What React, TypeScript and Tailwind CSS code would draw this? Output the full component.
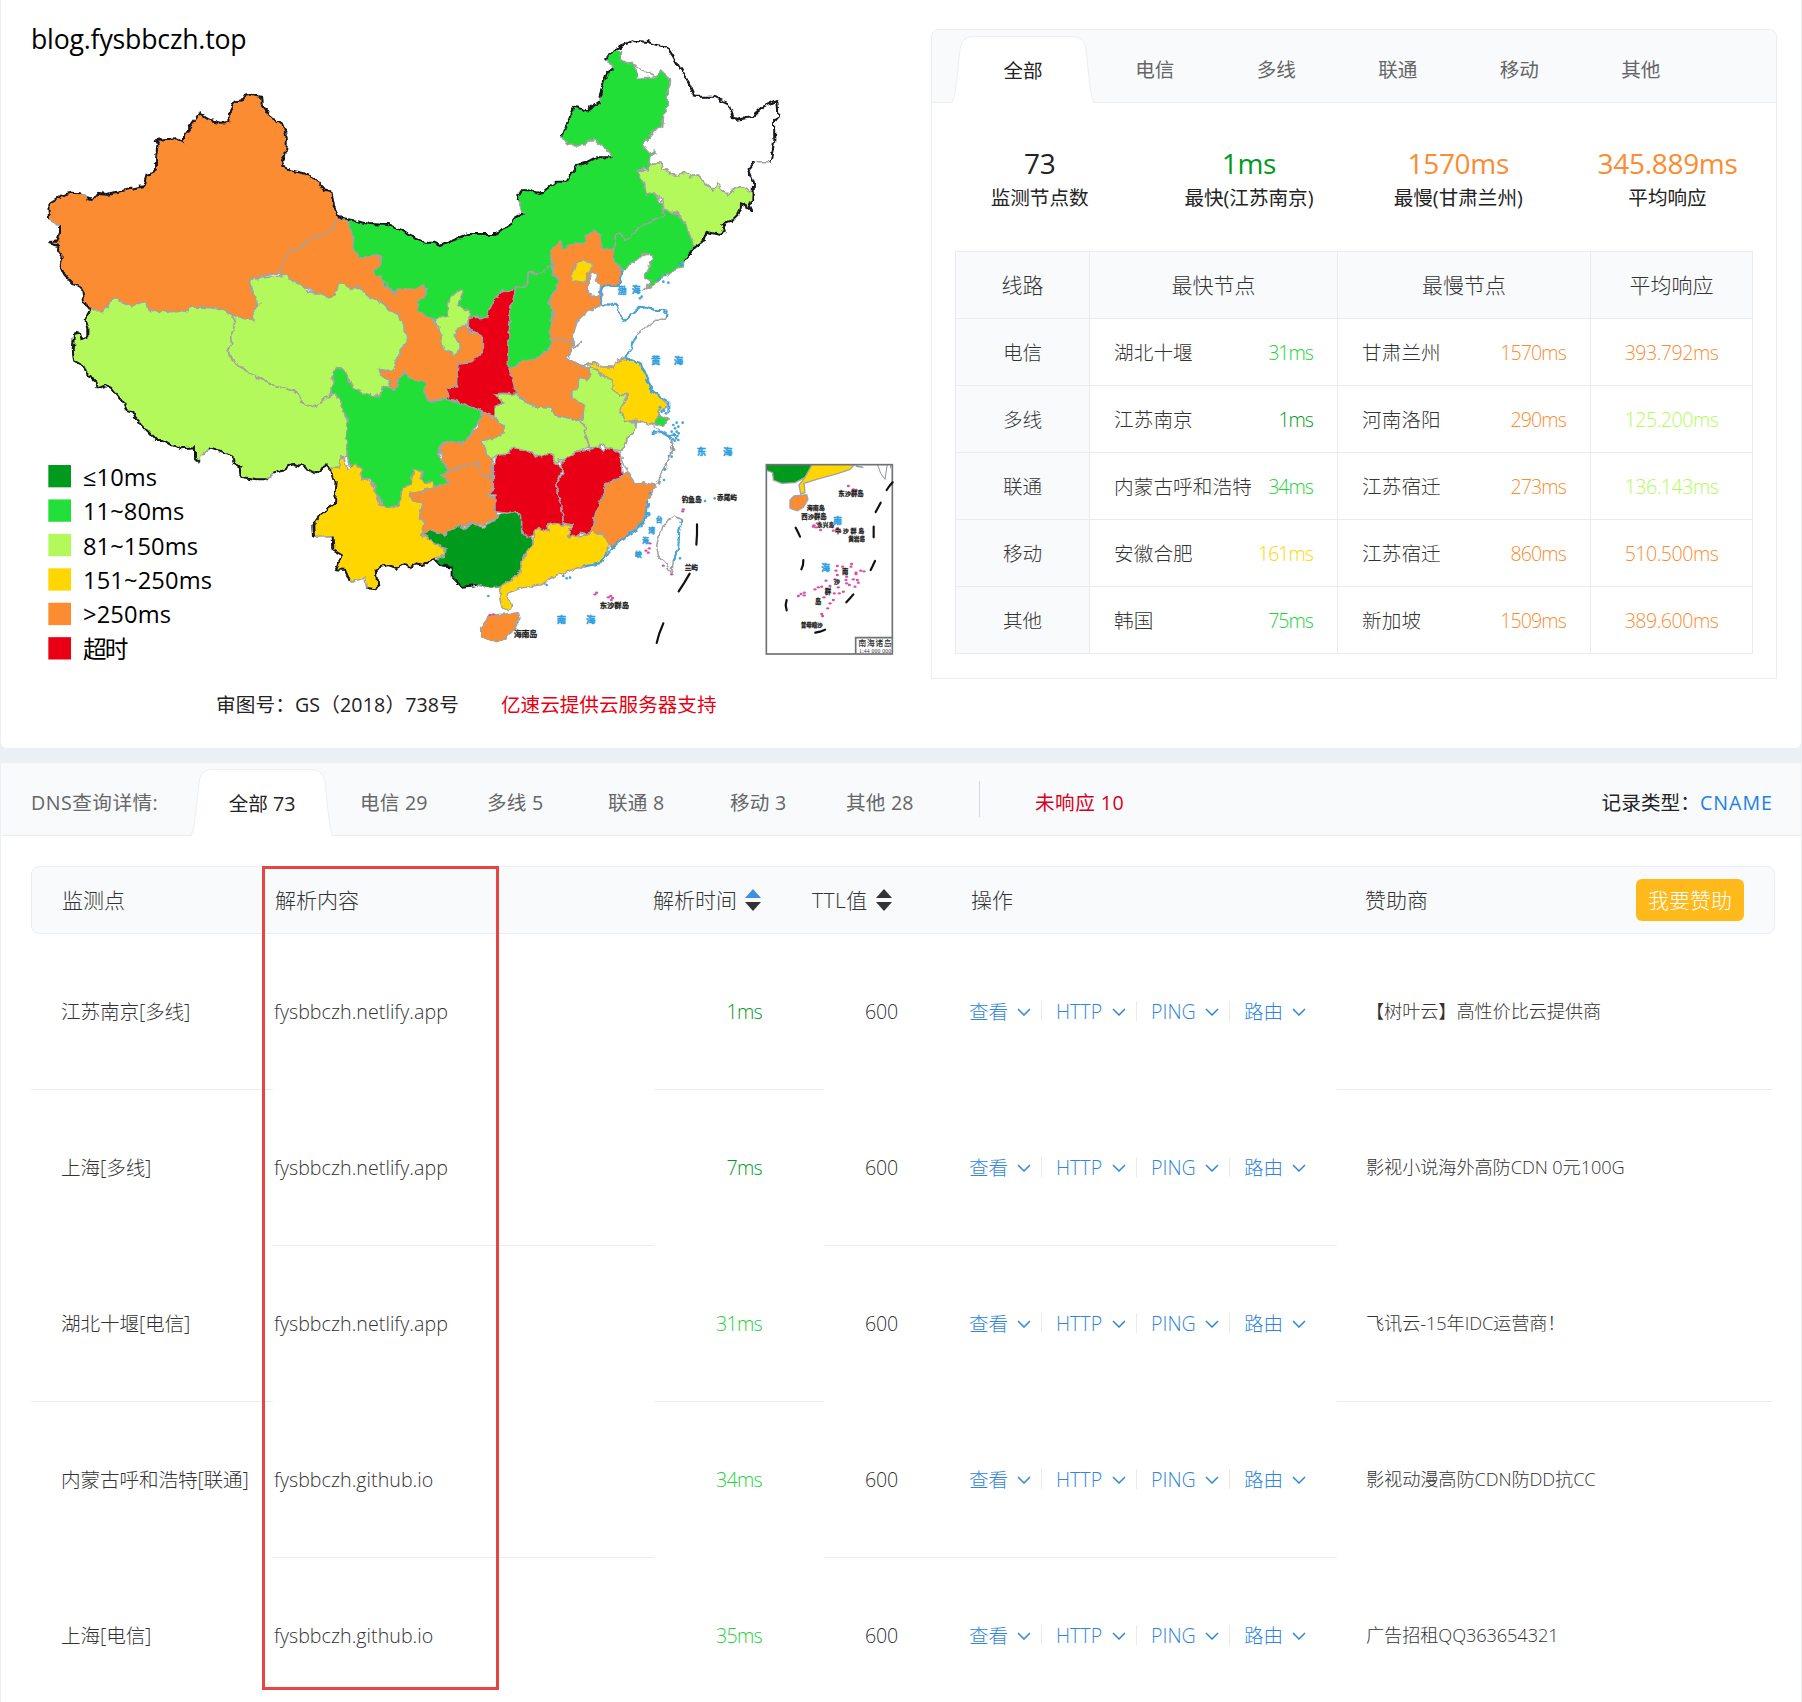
import React from "react";

type Province = { name: string; fill: string; d: string };

const C = {
  deep: "#009a1c",
  green: "#22df39",
  lime: "#b3f95b",
  yellow: "#ffd600",
  orange: "#fb8c31",
  red: "#ea0015",
  white: "#ffffff",
};

const PROVINCES: Province[] = [
  { name: "heilongjiang", fill: C.white, d: "1838,150 1865,138 1910,123 1940,125 1970,135 2000,140 2020,170 2040,205 2065,245 2085,290 2140,290 2185,310 2205,360 2255,352 2290,320 2332,300 2335,345 2322,360 2323,420 2312,485 2265,485 2245,508 2262,550 2262,580 2220,560 2200,570 2185,588 2165,565 2150,548 2140,572 2115,550 2095,525 2075,530 2055,515 2035,525 2010,520 1990,505 1985,488 1950,490 1928,432 1975,380 2000,240 1865,185" },
  { name: "neimenggu", fill: C.green, d: "1018,652 1110,672 1165,675 1205,690 1225,705 1275,728 1300,728 1320,738 1405,702 1485,702 1520,685 1540,655 1570,638 1552,600 1565,568 1585,568 1625,580 1665,545 1700,545 1730,495 1760,488 1790,472 1838,472 1820,450 1785,420 1765,420 1755,435 1705,435 1687,410 1705,360 1722,320 1760,332 1800,305 1800,285 1820,220 1840,205 1835,190 1815,180 1838,150 1865,152 1862,185 1880,192 1900,190 1915,235 1970,230 1980,212 2012,240 2002,270 2002,330 1988,345 1985,385 1975,380 1928,432 1950,460 1968,452 1968,462 1950,470 1945,505 1910,512 1925,535 1940,585 1965,578 1985,615 1992,645 1960,660 1920,685 1875,722 1860,700 1850,702 1845,745 1810,745 1785,720 1750,760 1700,770 1660,798 1620,818 1585,818 1582,855 1550,865 1510,890 1470,950 1405,970 1345,960 1290,958 1255,930 1200,890 1140,860 1060,780 1030,720" },
  { name: "gansu", fill: C.orange, d: "1018,652 1045,665 1060,720 1058,742 1075,775 1120,765 1142,770 1138,800 1118,812 1150,840 1165,870 1188,885 1200,865 1235,872 1270,855 1280,870 1275,890 1250,905 1255,930 1290,955 1300,965 1325,1000 1330,1045 1360,1065 1380,1040 1365,1010 1370,985 1395,980 1420,1000 1450,1015 1450,1055 1440,1075 1415,1085 1375,1090 1370,1130 1370,1160 1340,1165 1350,1185 1330,1195 1310,1205 1275,1195 1275,1155 1230,1135 1215,1120 1195,1135 1195,1160 1180,1168 1165,1140 1145,1128 1135,1105 1170,1112 1150,1040 1100,950 1000,900 835,830 855,780 865,750 900,745 935,712 960,708 1000,690 1005,665" },
  { name: "xinjiang", fill: C.orange, d: "741,282 783,290 786,318 812,352 828,360 848,375 860,410 860,440 855,468 843,488 848,500 875,512 910,520 940,532 972,568 994,574 1002,620 1018,652 1005,665 1000,690 960,708 935,712 900,745 865,750 855,780 835,820 750,838 760,880 780,912 758,930 762,962 722,948 695,945 670,930 640,925 610,922 575,922 565,935 545,932 510,932 480,938 445,925 432,905 395,918 375,908 340,895 310,932 285,932 270,930 252,905 246,865 215,848 192,822 182,800 188,770 174,750 175,738 145,730 150,725 172,725 180,700 180,675 150,660 148,612 170,598 185,585 215,578 245,580 258,595 275,600 292,578 320,582 380,570 430,558 440,525 468,512 468,470 473,432 465,420 530,415 552,430 552,405 598,340 625,358 660,368 688,366 690,330 702,305 730,300" },
  { name: "xizang", fill: C.lime, d: "270,930 285,932 310,932 340,895 375,908 395,918 432,905 445,925 480,938 510,932 545,932 565,935 575,922 610,922 640,925 670,930 695,945 705,962 700,990 692,1010 695,1030 685,1055 700,1080 720,1100 750,1120 790,1140 830,1160 860,1165 890,1178 905,1195 905,1210 935,1220 960,1210 985,1190 995,1180 1020,1192 1030,1230 1042,1260 1040,1320 1042,1370 1020,1370 1018,1405 990,1405 975,1390 965,1410 945,1420 905,1398 880,1392 850,1408 820,1418 800,1438 770,1438 722,1430 718,1398 705,1388 700,1372 660,1355 630,1345 605,1365 598,1385 585,1378 585,1342 545,1345 515,1335 490,1320 468,1320 435,1285 405,1250 400,1235 380,1230 370,1210 335,1165 320,1155 292,1165 290,1148 258,1118 250,1095 222,1080 218,1050 222,1005 240,1000 245,1020 262,1012 262,985 254,960" },
  { name: "qinghai", fill: C.lime, d: "750,838 862,825 870,838 905,852 915,872 950,880 980,892 1008,885 1015,848 1035,855 1055,865 1080,862 1100,885 1130,900 1155,915 1170,932 1195,942 1200,960 1215,970 1215,990 1222,1025 1200,1050 1200,1070 1185,1085 1188,1105 1170,1112 1135,1105 1145,1128 1165,1140 1172,1155 1145,1165 1140,1188 1115,1185 1090,1180 1060,1165 1045,1140 1035,1112 1015,1102 1000,1115 1000,1140 992,1175 985,1190 960,1210 935,1220 905,1210 905,1195 890,1178 860,1165 830,1160 790,1140 750,1120 720,1100 700,1080 685,1055 695,1030 692,1010 700,990 705,962 695,945 722,948 762,962 758,930 780,912 760,880" },
  { name: "sichuan", fill: C.green, d: "1015,1102 1035,1112 1045,1140 1060,1165 1090,1180 1115,1185 1140,1188 1145,1165 1172,1160 1180,1168 1195,1160 1195,1135 1215,1120 1230,1135 1265,1145 1275,1155 1275,1195 1310,1205 1330,1195 1390,1210 1445,1235 1435,1265 1420,1290 1405,1310 1390,1335 1365,1325 1340,1325 1320,1340 1318,1370 1335,1395 1350,1412 1325,1425 1350,1450 1302,1460 1275,1468 1265,1440 1265,1415 1245,1410 1240,1430 1230,1450 1205,1470 1200,1515 1160,1525 1145,1515 1130,1480 1115,1440 1085,1435 1080,1405 1065,1390 1050,1405 1042,1370 1040,1320 1042,1260 1030,1230 1020,1192 995,1180 992,1175 1000,1140 1000,1115" },
  { name: "yunnan", fill: C.yellow, d: "1020,1370 1032,1374 1042,1410 1065,1390 1080,1405 1085,1435 1105,1440 1115,1450 1130,1480 1140,1515 1160,1525 1200,1515 1205,1470 1230,1450 1245,1410 1265,1415 1262,1436 1275,1450 1300,1445 1302,1460 1270,1472 1235,1480 1232,1500 1268,1510 1258,1555 1275,1570 1265,1605 1300,1625 1335,1640 1335,1665 1300,1675 1270,1695 1250,1690 1230,1702 1215,1690 1190,1704 1165,1695 1130,1705 1135,1760 1130,1768 1100,1765 1095,1735 1050,1745 1035,1710 1008,1708 1025,1665 1000,1650 998,1610 942,1612 940,1575 970,1535 1005,1510 1010,1440 995,1435 990,1405 1018,1405" },
  { name: "guizhou", fill: C.orange, d: "1232,1480 1270,1475 1302,1462 1350,1450 1325,1425 1350,1412 1370,1408 1395,1390 1415,1395 1430,1385 1450,1425 1465,1435 1478,1410 1480,1460 1465,1490 1485,1490 1485,1535 1495,1550 1450,1575 1420,1572 1380,1585 1330,1605 1295,1592 1265,1605 1275,1570 1258,1555 1268,1510 1232,1500" },
  { name: "chongqing", fill: C.orange, d: "1445,1235 1485,1255 1510,1280 1510,1300 1480,1315 1445,1322 1455,1355 1475,1380 1478,1410 1465,1435 1450,1425 1430,1385 1415,1395 1395,1390 1370,1408 1350,1412 1335,1395 1325,1370 1320,1340 1340,1325 1365,1325 1390,1335 1405,1310 1435,1280" },
  { name: "guangxi", fill: C.deep, d: "1270,1600 1295,1590 1330,1605 1380,1575 1390,1588 1420,1572 1450,1582 1485,1560 1495,1545 1550,1532 1565,1550 1565,1595 1595,1605 1595,1640 1570,1670 1560,1715 1535,1740 1505,1760 1470,1765 1430,1755 1385,1760 1355,1730 1355,1700 1320,1695 1305,1680 1335,1668 1338,1645 1302,1632 1280,1615" },
  { name: "guangdong", fill: C.yellow, d: "1605,1600 1620,1585 1645,1595 1640,1575 1665,1570 1690,1575 1720,1575 1705,1610 1765,1605 1775,1592 1810,1605 1825,1630 1820,1665 1800,1690 1750,1700 1700,1715 1670,1725 1620,1755 1560,1765 1525,1780 1525,1800 1535,1815 1525,1828 1505,1820 1498,1790 1505,1760 1535,1740 1560,1715 1570,1670 1595,1640" },
  { name: "hainan", fill: C.orange, d: "1445,1875 1470,1845 1515,1842 1555,1838 1560,1855 1540,1890 1515,1920 1485,1928 1445,1910" },
  { name: "hunan", fill: C.red, d: "1480,1390 1495,1365 1525,1362 1540,1342 1580,1350 1620,1370 1650,1360 1665,1385 1690,1410 1670,1445 1672,1480 1685,1510 1690,1575 1665,1570 1640,1575 1645,1595 1620,1585 1605,1600 1580,1610 1565,1585 1565,1550 1550,1532 1525,1540 1485,1535 1485,1485 1465,1485 1480,1470" },
  { name: "jiangxi", fill: C.red, d: "1680,1385 1720,1360 1765,1350 1795,1338 1805,1355 1820,1340 1860,1360 1870,1420 1845,1440 1820,1450 1800,1505 1785,1545 1775,1590 1765,1605 1740,1600 1710,1612 1705,1590 1720,1575 1690,1570 1685,1510 1672,1480 1670,1445 1692,1420" },
  { name: "fujian", fill: C.orange, d: "1880,1415 1895,1430 1902,1450 1920,1455 1925,1445 1960,1450 1965,1465 1940,1500 1940,1540 1910,1585 1870,1615 1835,1645 1825,1630 1810,1605 1775,1592 1785,1545 1800,1505 1820,1450 1870,1425" },
  { name: "zhejiang", fill: C.white, d: "1910,1265 1960,1275 1970,1290 2010,1310 2020,1340 2010,1380 1990,1400 1975,1450 1960,1455 1930,1445 1920,1455 1902,1450 1895,1430 1875,1400 1860,1355 1880,1330 1880,1315 1905,1295" },
  { name: "anhui", fill: C.lime, d: "1760,1105 1780,1108 1800,1120 1835,1140 1840,1170 1862,1192 1880,1180 1885,1192 1870,1200 1860,1235 1880,1265 1910,1265 1905,1295 1880,1315 1880,1330 1860,1352 1820,1345 1800,1330 1795,1345 1767,1342 1760,1310 1752,1290 1758,1282 1732,1262 1752,1255 1755,1215 1730,1205 1710,1180 1730,1165 1735,1135 1765,1140 1775,1120" },
  { name: "hubei", fill: C.lime, d: "1485,1182 1510,1180 1548,1185 1575,1205 1605,1220 1655,1225 1665,1245 1695,1250 1732,1262 1758,1282 1752,1290 1767,1342 1740,1350 1705,1370 1665,1385 1655,1360 1620,1370 1580,1350 1540,1342 1525,1362 1495,1365 1475,1380 1455,1355 1445,1322 1480,1315 1510,1300 1510,1280 1485,1255 1485,1220 1505,1205" },
  { name: "henan", fill: C.orange, d: "1650,1015 1715,1025 1720,1040 1700,1075 1725,1090 1755,1100 1775,1120 1765,1140 1735,1135 1730,1165 1710,1180 1730,1205 1755,1215 1750,1258 1720,1260 1695,1250 1665,1245 1655,1225 1605,1220 1575,1205 1548,1180 1535,1130 1525,1110 1570,1085 1620,1070 1650,1050" },
  { name: "shaanxi", fill: C.red, d: "1550,862 1545,890 1525,928 1532,950 1528,990 1525,1110 1535,1130 1548,1183 1510,1180 1485,1182 1505,1205 1485,1220 1485,1250 1445,1235 1390,1210 1360,1200 1330,1195 1350,1185 1340,1165 1370,1160 1370,1130 1375,1090 1415,1085 1450,1055 1450,1015 1405,985 1405,955 1425,948 1435,957 1460,952 1470,925 1485,895 1510,870 1530,875" },
  { name: "shanxi", fill: C.green, d: "1582,855 1585,820 1620,818 1655,798 1660,825 1675,840 1670,870 1650,885 1650,910 1660,940 1650,1005 1650,1050 1620,1070 1570,1085 1535,1105 1525,1110 1528,990 1532,950 1525,928 1545,890 1550,865" },
  { name: "ningxia", fill: C.lime, d: "1300,960 1320,952 1345,945 1345,920 1350,890 1385,868 1390,875 1375,915 1410,935 1405,960 1400,980 1370,985 1365,1010 1380,1030 1380,1050 1365,1065 1330,1050 1325,1020 1320,985" },
  { name: "hebei", fill: C.orange, d: "1650,755 1680,722 1690,748 1720,730 1755,730 1760,705 1785,690 1800,705 1810,745 1845,750 1840,775 1868,812 1860,850 1845,860 1820,855 1805,865 1805,900 1805,915 1760,935 1730,965 1720,1000 1720,1020 1715,1025 1650,1015 1650,1005 1660,940 1650,910 1650,885 1670,870 1675,840 1660,825 1660,795" },
  { name: "beijing", fill: C.yellow, d: "1750,778 1760,788 1778,795 1775,810 1760,820 1760,840 1745,848 1715,845 1715,820 1725,795" },
  { name: "tianjin", fill: C.white, d: "1775,818 1788,818 1790,840 1802,850 1800,880 1790,890 1765,882 1765,840" },
  { name: "liaoning", fill: C.green, d: "1992,625 2015,640 2035,640 2065,685 2085,742 2050,785 2045,800 2010,815 1960,855 1930,870 1955,845 1932,830 1958,775 1945,760 1925,765 1900,790 1868,812 1840,775 1845,745 1850,702 1860,700 1875,722 1920,685 1960,660 1992,645" },
  { name: "jilin", fill: C.lime, d: "1950,490 1985,488 1990,505 2010,520 2035,525 2055,515 2075,530 2095,525 2115,550 2140,572 2150,548 2165,565 2185,588 2200,570 2220,560 2262,580 2260,600 2245,610 2255,632 2225,612 2215,645 2195,665 2170,672 2178,695 2160,705 2120,695 2110,725 2085,742 2065,685 2035,640 2015,640 1992,625 1985,600 1965,578 1940,585 1925,535 1910,512 1945,510" },
  { name: "shandong", fill: C.white, d: "1805,915 1850,915 1860,950 1875,962 1920,920 1970,930 2000,930 1995,958 1970,958 1910,1005 1880,1070 1850,1085 1840,1102 1810,1100 1785,1085 1760,1095 1725,1090 1700,1075 1720,1040 1720,1000 1730,965 1760,935" },
  { name: "jiangsu", fill: C.yellow, d: "1765,1098 1780,1085 1795,1100 1840,1102 1850,1085 1875,1075 1925,1095 1955,1170 1980,1190 2005,1215 1975,1235 1970,1270 1950,1275 1910,1260 1875,1265 1860,1235 1870,1210 1885,1192 1880,1180 1860,1190 1840,1170 1835,1140 1800,1120 1780,1108" },
  { name: "shanghai", fill: C.green, d: "1975,1240 2008,1260 1990,1278 1968,1272" },
  { name: "taiwan", fill: C.white, d: "2025,1548 2048,1560 2038,1590 2035,1640 2020,1685 2015,1720 2000,1695 1975,1670 1970,1635 1985,1580 2010,1558" },
];

const FRONTIERS = [
  "1018,652 1002,620 994,574 972,568 940,532 910,520 875,512 848,500 843,488 855,468 860,440 860,410 848,375 828,360 812,352 786,318 783,290 741,282 730,300 702,305 690,330 688,366 660,368 625,358 598,340 552,405 552,430 530,415 465,420 473,432 468,470 468,512 440,525 430,558 380,570 320,582 292,578 275,600 258,595",
  "245,580 215,578 185,585 170,598 148,612 150,660",
  "180,675 180,700 172,725 150,725 145,730 175,738 174,750 188,770 182,800 192,822 215,848 246,865 252,905 270,930 254,960 262,985 262,1012 245,1020 240,1000 222,1005 218,1050 222,1080 250,1095 258,1118 290,1148 292,1165 320,1155 335,1165 370,1210 380,1230 400,1235 405,1250 435,1285 468,1320 490,1320 515,1335 545,1345 585,1342 585,1378 598,1385",
  "630,1345 660,1355 700,1372 705,1388 718,1398 722,1430 770,1438 800,1438",
  "820,1418 850,1408 880,1392 905,1398 945,1420 965,1410 975,1390 990,1405 995,1435 1010,1440 1005,1510 970,1535 940,1575 942,1612",
  "998,1610 1000,1650 1025,1665 1008,1708 1035,1710 1050,1745",
  "1100,1765 1130,1768 1135,1760 1130,1705 1165,1695 1190,1704 1215,1690 1230,1702 1250,1690 1270,1695 1300,1675 1320,1695 1355,1700 1355,1730 1385,1760 1430,1755",
  "1018,652 1110,672 1165,675 1205,690 1225,705 1275,728 1300,728 1320,738 1405,702 1485,702 1520,685 1540,655 1570,638",
  "1552,600 1565,568 1585,568 1625,580 1665,545 1700,545 1730,495 1760,488 1790,472 1838,472",
  "1687,410 1705,360 1722,320 1760,332 1800,305",
  "1798,290 1820,220 1840,205",
  "1815,180 1838,150 1865,138 1910,123 1940,125 1970,135 2000,140 2020,170 2040,205 2065,245 2085,290 2140,290 2185,310 2205,360 2255,352 2290,320 2332,300 2335,345 2322,360 2323,420 2312,485",
  "2265,485 2245,508 2262,550 2260,600 2245,610 2255,632 2225,612 2215,645 2195,665 2170,672 2178,695 2160,705 2120,695 2110,725 2085,742 2050,785",
];

const COASTS = [
  "2045,800 2042,788",
  "1868,812 1860,850 1845,860 1820,855 1805,865 1800,890 1812,912 1850,915 1860,950 1875,962 1920,920 1970,930 2000,930 1998,955",
  "1910,1005 1880,1070",
  "1880,1075 1925,1095 1955,1170 1980,1190 2005,1205 2005,1240",
  "1955,1300 1985,1295 2010,1310 2025,1300",
  "1945,1500 1940,1545 1910,1590 1870,1615 1835,1645 1800,1690 1750,1700",
  "2048,1560 2038,1590 2035,1640 2020,1685",
];

const SEA_DOTS = [
  [1980, 835], [1990, 845], [1995, 825], [1975, 840], [2005, 848], [1925, 890], [1920, 895],
  [2020, 1275], [2030, 1268], [2035, 1280], [2015, 1295], [2030, 1295], [2028, 1315], [2035, 1320], [2048, 1268],
  [2025, 1285], [2022, 1305], [2032, 1308], [2018, 1318], [2024, 1322], [2036, 1300], [1980, 1222], [1992, 1232], [1998, 1240], [1985, 1235],
  [2015, 1370], [1995, 1408], [1992, 1440], [1950, 1480], [1945, 1515], [1947, 1540], [1930, 1570],
  [1948, 1545], [1942, 1542], [1925, 1578], [2115, 1503], [2144, 1495],
  [2040, 1675], [1700, 1735], [1690, 1728], [1710, 1733], [1640, 1755], [1465, 1788],
];

type Label = { t: string; x: number; y: number; s: number; w: number };

const BLACK_LABELS: Label[] = [
  { t: "钓鱼岛", x: 2045, y: 1507, s: 20, w: 60 },
  { t: "赤尾屿", x: 2151, y: 1499, s: 20, w: 60 },
  { t: "兰屿", x: 2054, y: 1711, s: 20, w: 40 },
  { t: "东沙群岛", x: 1799, y: 1824, s: 22, w: 88 },
  { t: "海南岛", x: 1541, y: 1911, s: 24, w: 71 },
  { t: "东沙群岛", x: 2515, y: 1489, s: 19, w: 76 },
  { t: "海南岛", x: 2420, y: 1531, s: 18, w: 54 },
  { t: "西沙群岛", x: 2404, y: 1557, s: 19, w: 76 },
  { t: "永兴岛", x: 2452, y: 1580, s: 16, w: 50 },
  { t: "中沙群岛", x: 2505, y: 1600, s: 18, w: 88 },
  { t: "黄岩岛", x: 2545, y: 1624, s: 17, w: 50 },
  { t: "南", x: 2526, y: 1721, s: 19, w: 19 },
  { t: "沙", x: 2501, y: 1753, s: 19, w: 19 },
  { t: "群", x: 2474, y: 1783, s: 19, w: 19 },
  { t: "岛", x: 2445, y: 1813, s: 19, w: 19 },
  { t: "曾母暗沙", x: 2402, y: 1880, s: 17, w: 66 },
];

const BLUE_LABELS: Label[] = [
  { t: "渤", x: 1853, y: 881, s: 26, w: 25 },
  { t: "海", x: 1895, y: 880, s: 26, w: 25 },
  { t: "黄", x: 1953, y: 1091, s: 28, w: 27 },
  { t: "海", x: 2021, y: 1091, s: 28, w: 27 },
  { t: "东", x: 2090, y: 1365, s: 28, w: 27 },
  { t: "海", x: 2169, y: 1365, s: 28, w: 27 },
  { t: "南", x: 1670, y: 1868, s: 28, w: 27 },
  { t: "海", x: 1758, y: 1868, s: 28, w: 27 },
  { t: "台", x: 1967, y: 1567, s: 20, w: 20 },
  { t: "湾", x: 1945, y: 1598, s: 20, w: 20 },
  { t: "海", x: 1926, y: 1629, s: 20, w: 20 },
  { t: "峡", x: 1905, y: 1670, s: 20, w: 20 },
  { t: "南", x: 2500, y: 1571, s: 26, w: 25 },
  { t: "海", x: 2464, y: 1714, s: 26, w: 25 },
];

const PINK_DOTS = [
  [2512, 1698], [2508, 1712], [2512, 1725], [2505, 1738], [2553, 1700], [2555, 1692], [2568, 1718], [2582, 1712], [2592, 1714], [2568, 1722],
  [2540, 1750], [2548, 1755], [2560, 1738], [2565, 1760], [2575, 1748], [2572, 1740], [2538, 1740], [2478, 1742], [2445, 1768], [2455, 1762], [2465, 1760],
  [2490, 1758], [2515, 1762], [2518, 1780], [2503, 1780], [2500, 1800], [2490, 1810], [2483, 1825], [2465, 1842], [2468, 1848], [2472, 1792],
  [2395, 1788], [2403, 1782], [2413, 1786], [2413, 1778], [2530, 1775], [2442, 1576], [2448, 1582], [2462, 1590], [2500, 1592], [2512, 1585], [2520, 1595],
  [2545, 1458], [2568, 1470], [2560, 1468], [2590, 1610], [2540, 1730], [2528, 1700], [2440, 1580], [2452, 1570],
  [1790, 1778], [1785, 1783], [2050, 1528], [2048, 1534], [1950, 1630], [1948, 1645], [1938, 1652], [1945, 1658], [1990, 1697], [2015, 1723], [1470, 1845], [1480, 1843],
  [1825, 1792], [1832, 1788], [1838, 1794], [1834, 1800],
];

const DASHES = [
  "2091,1573 2091,1603 2089,1634", "2069,1721 2053,1748 2036,1774", "1990,1870 1978,1900 1970,1929",
  "2678,1447 2669,1457 2660,1470", "2642,1508 2634,1523 2627,1536", "2387,1583 2394,1597 2400,1610",
  "2621,1580 2621,1612", "2410,1680 2409,1695 2404,1708", "2625,1683 2618,1698 2612,1710",
  "2360,1800 2357,1815 2360,1831", "2560,1783 2550,1795 2539,1807", "2475,1889 2460,1895 2446,1898",
];

const LEGEND = [
  { c: C.deep, t: "≤10ms", w: 222 },
  { c: C.green, t: "11~80ms", w: 304 },
  { c: C.lime, t: "81~150ms", w: 345 },
  { c: C.yellow, t: "151~250ms", w: 387 },
  { c: C.orange, t: ">250ms", w: 264 },
  { c: C.red, t: "超时", w: 136 },
];

function ChinaMap() {
  return (
    <svg className="block h-[690px] w-[920px]" viewBox="0 0 2760 2070">
      <defs>
        <filter id="rough" x="0" y="0" width="2760" height="2070" filterUnits="userSpaceOnUse">
          <feTurbulence type="fractalNoise" baseFrequency="0.05" numOctaves="2" seed="4" result="n" />
          <feDisplacementMap in="SourceGraphic" in2="n" scale="18" xChannelSelector="R" yChannelSelector="G" />
        </filter>
        <clipPath id="inset">
          <rect x="2299" y="1395" width="378" height="568" />
        </clipPath>
      </defs>
      <g filter="url(#rough)" strokeLinejoin="round">
        {PROVINCES.map((p) => (
          <polygon key={p.name} points={p.d} fill={p.fill} stroke="#a3a3a3" strokeWidth="4.5" />
        ))}
        <path d="M1721 1042 L1746 1024" stroke="#a3a3a3" strokeWidth="7" />
        {FRONTIERS.map((d, i) => (
          <polyline key={i} points={d} fill="none" stroke="#16181c" strokeWidth="6" />
        ))}
        {COASTS.map((d, i) => (
          <polyline key={i} points={d} fill="none" stroke="#42a3dd" strokeWidth="6" />
        ))}
        <polyline points="1880,1075 1925,1095 1955,1170 1980,1190" fill="none" stroke="#42a3dd" strokeWidth="9" />
        <polyline points="2010,1310 2018,1345 2008,1380 1990,1410 1970,1450" fill="none" stroke="#8f99a3" strokeWidth="6" strokeDasharray="10 4" />
      </g>
      {SEA_DOTS.map(([x, y], i) => (
        <circle key={i} cx={x} cy={y} r="4" fill="#42a3dd" />
      ))}

      <g clipPath="url(#inset)">
        <rect x="2297" y="1392" width="382" height="572" fill="#fff" />
        <path d="M2297 1392 H2437 L2433 1415 L2415 1432 L2385 1448 L2345 1450 L2320 1440 L2318 1418 L2297 1410Z" fill={C.deep} stroke="#a3a3a3" strokeWidth="4" />
        <path d="M2437 1392 H2565 L2550 1408 L2515 1420 L2450 1438 L2412 1450 L2415 1478 L2402 1482 L2397 1455 L2415 1432Z" fill={C.yellow} stroke="#a3a3a3" strokeWidth="4" />
        <path d="M2370 1500 L2382 1488 L2420 1484 L2424 1498 L2410 1522 L2392 1532 L2370 1525Z" fill={C.orange} stroke="#a3a3a3" strokeWidth="4" />
        <path d="M2632 1392 L2642 1420 L2655 1438 L2662 1392 M2672 1392 V1405" fill="none" stroke="#8794a0" strokeWidth="3" />
        <path d="M2567 1398 L2590 1402" stroke="#8794a0" strokeWidth="4" />
      </g>
      <rect x="2299" y="1394" width="378" height="568" fill="none" stroke="#6f7276" strokeWidth="5" />
      <path d="M2567 1962 V1913 H2677" fill="none" stroke="#6f7276" strokeWidth="5" />
      <g fill="#333" fontFamily="'Noto Sans CJK SC', sans-serif" fontWeight="500">
        <text x="2575" y="1939" fontSize="24" textLength="100">南海诸岛</text>
        <text x="2577" y="1958" fontSize="17" textLength="96" fontFamily="'Liberation Serif', serif">1:44 000 000</text>
      </g>

      {PINK_DOTS.map(([x, y], i) => (
        <ellipse key={i} cx={x} cy={y} rx="4.8" ry="3.6" fill="#d950a6" />
      ))}
      {DASHES.map((d, i) => (
        <polyline key={i} points={d} fill="none" stroke="#111" strokeWidth="6.5" strokeLinecap="round" />
      ))}
      <g fontFamily="'Noto Sans CJK SC', sans-serif" fontWeight="700">
        {BLACK_LABELS.map((l, i) => (
          <text key={i} x={l.x} y={l.y} fontSize={l.s} textLength={l.w} fill="#1c1c1c" stroke="#1c1c1c" strokeWidth="0.8">{l.t}</text>
        ))}
        {BLUE_LABELS.map((l, i) => (
          <text key={i} x={l.x} y={l.y} fontSize={l.s} fill="#2f9fe0" stroke="#2f9fe0" strokeWidth="1.4">{l.t}</text>
        ))}
      </g>

      <g fontFamily="'Open Sans', 'Noto Sans CJK SC', sans-serif" fill="#000">
        <text x="93" y="147" fontSize="80" textLength="647">blog.fysbbczh.top</text>
        {LEGEND.map((l, i) => (
          <g key={l.t}>
            <rect x="145" y={1395 + i * 103.3} width="68" height="67" fill={l.c} />
            <text x="249" y={1457 + i * 103.3} fontSize="71" textLength={l.w}>{l.t}</text>
          </g>
        ))}
      </g>
    </svg>
  );
}

function ActiveTab({ children }: { children: React.ReactNode }) {
  return (
    <div className="relative -mb-px flex h-[67px] w-[142px] shrink-0 items-center justify-center text-[#222]">
      <svg className="absolute inset-0 h-full w-full" viewBox="0 0 142 67">
        <path d="M0 67 C4 60 6 30 8 14 Q9 0.5 21 0.5 H121 Q133 0.5 134 14 C136 30 138 60 142 67Z" fill="#fff" />
        <path d="M0 66.500 C4 60 6 30 8 14 Q9 0.5 21 0.5 H121 Q133 0.5 134 14 C136 30 138 60 142 66.500" fill="none" stroke="#eceef0" />
      </svg>
      <span className="relative pt-[3px]">{children}</span>
    </div>
  );
}

const STATS = [
  { v: "73", l: "监测节点数", c: "text-[#222]" },
  { v: "1ms", l: "最快(江苏南京)", c: "text-[#009a1c]" },
  { v: "1570ms", l: "最慢(甘肃兰州)", c: "text-[#fb8c31]" },
  { v: "345.889ms", l: "平均响应", c: "text-[#fb8c31]" },
];

const ORANGE = "text-[#fb8c31]";
const GREEN = "text-[#22d339]";
const DEEP = "text-[#009a1c]";
const LIME = "text-[#b3f95b]";

const LINES = [
  ["电信", "湖北十堰", "31ms", GREEN, "甘肃兰州", "1570ms", "393.792ms", ORANGE],
  ["多线", "江苏南京", "1ms", DEEP, "河南洛阳", "290ms", "125.200ms", LIME],
  ["联通", "内蒙古呼和浩特", "34ms", GREEN, "江苏宿迁", "273ms", "136.143ms", LIME],
  ["移动", "安徽合肥", "161ms", "text-[#ffd600]", "江苏宿迁", "860ms", "510.500ms", ORANGE],
  ["其他", "韩国", "75ms", GREEN, "新加坡", "1509ms", "389.600ms", ORANGE],
];

function SummaryPanel() {
  return (
    <div className="mt-[29px] ml-[11px] h-[650px] w-[846px] shrink-0 rounded-t-lg border border-[#ebeef0]">
      <div className="flex h-[73px] items-end rounded-t-lg border-b border-[#eceef0] bg-[#f8fafc] pl-[20px] text-[19.6px] text-[#666]">
        <ActiveTab>全部</ActiveTab>
        <div className="flex h-[66px] items-center pt-[2px]">
          {["电信", "多线", "联通", "移动", "其他"].map((t) => (
            <span key={t} className="w-[121.500px] text-center">{t}</span>
          ))}
        </div>
      </div>
      <div className="flex h-[148px] pt-[40px] pl-[3px]">
        {STATS.map((s) => (
          <div key={s.l} className="w-[209.300px] shrink-0 text-center whitespace-nowrap">
            <div className={`text-[28px] leading-[40px] tracking-[-0.3px] ${s.c}`}>{s.v}</div>
            <div className="text-[19.6px] leading-[30px] text-[#222]">{s.l}</div>
          </div>
        ))}
      </div>
      <div className="ml-[23px] w-[798px] border-t border-l border-[#ebebee] font-light whitespace-nowrap">
        <div className="grid h-[67px] grid-cols-[134px_248px_253px_162px] bg-[#f8fafc] text-[21px] text-[#333]">
          {["线路", "最快节点", "最慢节点", "平均响应"].map((h) => (
            <div key={h} className="flex items-center justify-center border-r border-b border-[#ebebee] pt-[2px]">{h}</div>
          ))}
        </div>
        {LINES.map((r) => (
          <div key={r[0]} className="grid h-[67px] grid-cols-[134px_248px_253px_162px] text-[19.6px] text-[#333]">
            <div className="flex items-center justify-center border-r border-b border-[#ebebee] bg-[#f8fafc] pt-px">{r[0]}</div>
            <div className="flex items-center justify-between border-r border-b border-[#ebebee] px-[24px] pt-px">
              <span className="tracking-[0.100px]">{r[1]}</span>
              <span className={`tracking-[-1px] ${r[3]}`}>{r[2]}</span>
            </div>
            <div className="flex items-center justify-between border-r border-b border-[#ebebee] px-[24px] pt-px">
              <span className="tracking-[0.100px]">{r[4]}</span>
              <span className={`tracking-[-0.9px] ${ORANGE}`}>{r[5]}</span>
            </div>
            <div className={`flex items-center justify-center border-r border-b border-[#ebebee] pt-px tracking-[-0.5px] ${r[7]}`}>{r[6]}</div>
          </div>
        ))}
      </div>
    </div>
  );
}

function Sort({ up }: { up: string }) {
  return (
    <svg className="h-[22px] w-[16px]" viewBox="0 0 16 22">
      <path d="M8 0 L16 9 H0Z" fill={up} />
      <path d="M8 22 L16 13 H0Z" fill="#333" />
    </svg>
  );
}

function Action({ label, width, last }: { label: string; width: string; last?: boolean }) {
  return (
    <span className={`flex shrink-0 items-center ${width}`}>
      <span className="flex-1">{label}</span>
      <svg className="mt-[2px] h-[8px] w-[14px]" viewBox="0 0 14 8" fill="none" stroke="#2f86dc" strokeWidth="1.5">
        <path d="M1 1 L7 7 L13 1" />
      </svg>
      {!last && <i className="mr-[14px] ml-[10px] h-[20px] w-px bg-[#e8eaec]" />}
    </span>
  );
}

const ROWS = [
  ["江苏南京[多线]", "fysbbczh.netlify.app", "1ms", DEEP, "【树叶云】高性价比云提供商"],
  ["上海[多线]", "fysbbczh.netlify.app", "7ms", DEEP, "影视小说海外高防CDN 0元100G"],
  ["湖北十堰[电信]", "fysbbczh.netlify.app", "31ms", GREEN, "飞讯云-15年IDC运营商！"],
  ["内蒙古呼和浩特[联通]", "fysbbczh.github.io", "34ms", GREEN, "影视动漫高防CDN防DD抗CC"],
  ["上海[电信]", "fysbbczh.github.io", "35ms", GREEN, "广告招租QQ363654321"],
];

const TABS = [
  ["电信 29", "w-[127px]"],
  ["多线 5", "w-[121px]"],
  ["联通 8", "w-[122px]"],
  ["移动 3", "w-[116px]"],
  ["其他 28", "w-[133px]"],
];

export default function App() {
  return (
    <div className="h-[1702px] w-[1802px] overflow-hidden bg-[#ebf0f4] font-['Open_Sans','Noto_Sans_CJK_SC',sans-serif]">
      <section className="mx-px flex h-[748px] rounded-b-md bg-white">
        <div className="-ml-px w-[920px] shrink-0">
          <ChinaMap />
          <div className="-mt-px flex h-[32px] items-center pl-[216px] text-[19.6px] whitespace-nowrap text-[#222]">
            <span className="w-[285px] tracking-[0.150px]">审图号：GS（2018）738号</span>
            <span className="text-[#e60012]">亿速云提供云服务器支持</span>
          </div>
        </div>
        <SummaryPanel />
      </section>

      <section className="mx-px mt-[15px] h-[939px] rounded-t-md bg-white">
        <div className="flex h-[73px] items-end border-b border-[#eaecee] bg-[#f8fafc] text-[19.6px] whitespace-nowrap text-[#666]">
          <div className="flex h-[66px] w-[190px] items-center pt-[2px] pl-[30px] tracking-[0.500px]">DNS查询详情:</div>
          <ActiveTab>全部 73</ActiveTab>
          <div className="flex h-[66px] flex-1 items-center pt-[2px] pl-[27px] tracking-[0.200px]">
            {TABS.map(([t, w]) => (
              <span key={t} className={w}>{t}</span>
            ))}
            <i className="mb-2 h-[36px] w-px bg-[#d5d8da]" />
            <span className="ml-[55px] tracking-[0.500px] text-[#d9001b]">未响应 10</span>
            <span className="ml-auto pr-[28px] tracking-[0.100px] text-[#222]">
              记录类型：<span className="tracking-[1px] text-[#1e80e6]">CNAME</span>
            </span>
          </div>
        </div>

        <div className="relative mt-[30px] ml-[30px] w-[1744px] font-light whitespace-nowrap">
          <div className="grid h-[68px] grid-cols-[242px_349px_158px_159px_394px_1fr] items-center rounded-lg border border-[#ebeef0] bg-[#f8fafc] text-[21px] text-[#333]">
            <span className="pt-[2px] pl-[30px]">监测点</span>
            <span className="pt-[2px] pl-px">解析内容</span>
            <span className="flex items-center gap-[8px] pl-[30px]"><span className="pt-[2px]">解析时间</span><Sort up="#3d8fe0" /></span>
            <span className="flex items-center gap-[8px] pl-[31px]"><span className="pt-[2px] tracking-[0.500px]">TTL值</span><Sort up="#333" /></span>
            <span className="pt-[2px] pl-[31px]">操作</span>
            <span className="flex items-center justify-between pr-[30px] pl-[31px]">
              <span className="pt-[2px]">赞助商</span>
              <span className="flex h-[42px] w-[108px] items-center justify-center rounded-md bg-[#ffb91a] pt-[2px] text-white">我要赞助</span>
            </span>
          </div>
          {ROWS.map((r, i) => {
            const a = i % 2 === 0 ? "border-[#ececef]" : "border-transparent";
            const b = i % 2 === 0 ? "border-transparent" : "border-[#ececef]";
            return (
              <div key={i} className="grid h-[156px] w-[1741px] grid-cols-[242px_381px_170px_513px_435px] text-[19.6px] text-[#333]">
                <div className={`flex items-center border-b pl-[30px] tracking-[-0.100px] ${a}`}>{r[0]}</div>
                <div className={`flex items-center border-b pl-px tracking-[0.050px] ${b}`}>{r[1]}</div>
                <div className={`flex items-center justify-end border-b pr-[62px] tracking-[-0.7px] ${a} ${r[3]}`}>{r[2]}</div>
                <div className={`flex items-center border-b text-[#2f86dc] ${b}`}>
                  <span className="w-[145px] pl-[41px] tracking-[-0.200px] text-[#333]">600</span>
                  <Action label="查看" width="w-[87px]" />
                  <Action label="HTTP" width="w-[95px]" />
                  <Action label="PING" width="w-[93px]" />
                  <Action label="路由" width="w-[62px]" last />
                </div>
                <div className={`flex items-center border-b pl-[29px] text-[18.2px] tracking-[-0.100px] ${a}`}>{r[4]}</div>
              </div>
            );
          })}
          <div className="pointer-events-none absolute top-0 left-[231px] h-[824px] w-[237px] border-[3px] border-[#e54545]" />
        </div>
      </section>
    </div>
  );
}
